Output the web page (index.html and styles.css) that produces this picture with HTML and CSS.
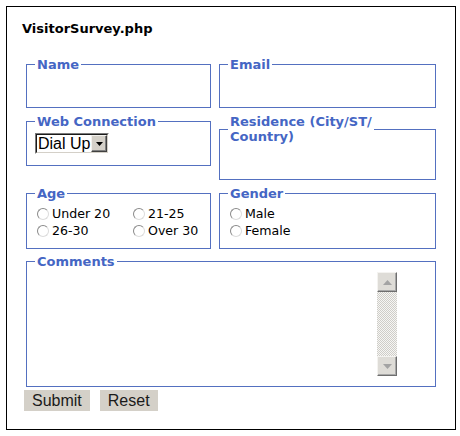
FILE: index.html
```html
<!DOCTYPE html>
<html>
<head>
<meta charset="utf-8">
<title>VisitorSurvey.php</title>
<link rel="stylesheet" href="styles.css">
</head>
<body>
<div class="page">
  <h1 class="title">VisitorSurvey.php</h1>
  <form class="survey">
    <div class="grid">
      <fieldset class="fs fs-empty">
        <legend>Name</legend>
      </fieldset>
      <fieldset class="fs fs-empty">
        <legend>Email</legend>
      </fieldset>
      <fieldset class="fs fs-web">
        <legend>Web Connection</legend>
        <div class="select">
          <div class="select-inner">
            <span class="select-value">Dial Up</span>
            <span class="select-btn"><svg width="7" height="4" viewBox="0 0 7 4"><path d="M0 0H7L3.5 4Z" fill="#000"/></svg></span>
          </div>
        </div>
      </fieldset>
      <fieldset class="fs fs-empty">
        <legend>Residence (City/ST/<br>Country)</legend>
      </fieldset>
      <fieldset class="fs fs-radios">
        <legend>Age</legend>
        <div class="radio-grid age">
          <label class="radio"><input type="radio" name="age">Under 20</label>
          <label class="radio"><input type="radio" name="age">21-25</label>
          <label class="radio"><input type="radio" name="age">26-30</label>
          <label class="radio"><input type="radio" name="age">Over 30</label>
        </div>
      </fieldset>
      <fieldset class="fs fs-radios">
        <legend>Gender</legend>
        <div class="radio-grid">
          <label class="radio"><input type="radio" name="gender">Male</label>
          <label class="radio"><input type="radio" name="gender">Female</label>
        </div>
      </fieldset>
    </div>
    <fieldset class="fs fs-comments">
      <legend>Comments</legend>
      <div class="comment-box">
        <textarea class="comment-text"></textarea>
        <div class="scrollbar">
          <span class="sb-btn"><svg width="9" height="5" viewBox="0 0 9 5"><path d="M4.5 0L9 5H0Z" fill="#a3a3a3"/></svg></span>
          <span class="sb-track"></span>
          <span class="sb-btn"><svg width="9" height="5" viewBox="0 0 9 5"><path d="M0 0H9L4.5 5Z" fill="#a3a3a3"/></svg></span>
        </div>
      </div>
    </fieldset>
    <div class="actions">
      <button type="button" class="btn">Submit</button>
      <button type="button" class="btn">Reset</button>
    </div>
  </form>
</div>
</body>
</html>
```
FILE: styles.css
```css
html, body {
  margin: 0;
  background: #fff;
}
body {
  padding: 6px;
  font-family: "DejaVu Sans", Verdana, sans-serif;
}
.page {
  box-sizing: border-box;
  width: 450px;
  height: 424px;
  border: 1px solid #000;
  padding: 14px 0 0 15px;
}
.title {
  margin: 0 0 21px 0;
  font-size: 13px;
  line-height: 15px;
  font-weight: bold;
  color: #000;
}
.survey {
  margin: 0;
}
.grid {
  margin-left: 4px;
  display: grid;
  grid-template-columns: 185px 217px;
  column-gap: 8px;
  row-gap: 6px;
  align-items: start;
}
.fs {
  margin: 0;
  padding: 0 8px;
  border: 1px solid #5470c0;
  min-width: 0;
}
.fs legend {
  padding: 0 2px;
  font-size: 13px;
  line-height: 15px;
  font-weight: bold;
  color: #4566c4;
}
.fs-empty {
  padding-bottom: 35px;
}
.fs-web {
  padding-bottom: 11px;
}
.fs-radios {
  padding-bottom: 9px;
}
.fs-comments {
  margin: 5px 0 0 4px;
  width: 410px;
  box-sizing: border-box;
  padding-bottom: 10px;
}

/* select */
.select {
  margin-top: 4px;
  display: inline-block;
  border: 1px solid;
  border-color: #7a7a7a #fff #fff #7a7a7a;
}
.select-inner {
  display: flex;
  height: 17px;
  border: 1px solid;
  border-color: #1a1a1a #d4d0c8 #d4d0c8 #1a1a1a;
  background: #fff;
}
.select-value {
  width: 53px;
  padding-left: 1px;
  font-family: "Liberation Sans", Arial, sans-serif;
  font-size: 16px;
  line-height: 17px;
  color: #000;
}
.select-btn {
  box-sizing: border-box;
  width: 16px;
  height: 17px;
  display: flex;
  align-items: center;
  justify-content: center;
  background: #d4d0c8;
  border: 1px solid;
  border-color: #f2f1ee #404040 #404040 #f2f1ee;
  box-shadow: inset -1px -1px #808080;
}

/* radios */
.radio-grid {
  padding-top: 4px;
  display: grid;
  grid-template-columns: auto;
}
.radio-grid.age {
  grid-template-columns: 96px auto;
}
.radio {
  display: flex;
  align-items: center;
  height: 17px;
  font-size: 12.6px;
  line-height: 17px;
  color: #000;
  white-space: nowrap;
}
.radio input {
  -webkit-appearance: none;
  appearance: none;
  box-sizing: border-box;
  width: 12px;
  height: 12px;
  margin: 0 3px 0 2px;
  border-radius: 50%;
  border: 1px solid;
  border-color: #8a8a8a #dcdcdc #dcdcdc #8a8a8a;
  background: #fff;
}

/* textarea */
.comment-box {
  margin-top: 3px;
  display: flex;
  width: 362px;
  height: 104px;
}
.comment-text {
  flex: 1;
  border: 0;
  padding: 0;
  margin: 0;
  resize: none;
  outline: none;
  background: #fff;
}
.scrollbar {
  width: 20px;
  display: flex;
  flex-direction: column;
}
.sb-btn {
  box-sizing: border-box;
  height: 20px;
  display: flex;
  align-items: center;
  justify-content: center;
  background: #dedcd7;
  border: 1px solid;
  border-color: #f4f3f0 #6e6e6e #6e6e6e #f4f3f0;
  box-shadow: inset -1px -1px #a8a8a8;
}
.sb-track {
  flex: 1;
  background: repeating-conic-gradient(#cfcdc8 0 25%, #f6f6f4 0 50%) 0 0 / 2px 2px;
}

/* buttons */
.actions {
  margin: 3px 0 0 2px;
  display: flex;
  gap: 10px;
}
.btn {
  height: 21px;
  padding: 0 8px;
  border: 0;
  background: #d4d0c8;
  font-family: "Liberation Sans", Arial, sans-serif;
  font-size: 16px;
  line-height: 21px;
  color: #1a1a1a;
}
```
